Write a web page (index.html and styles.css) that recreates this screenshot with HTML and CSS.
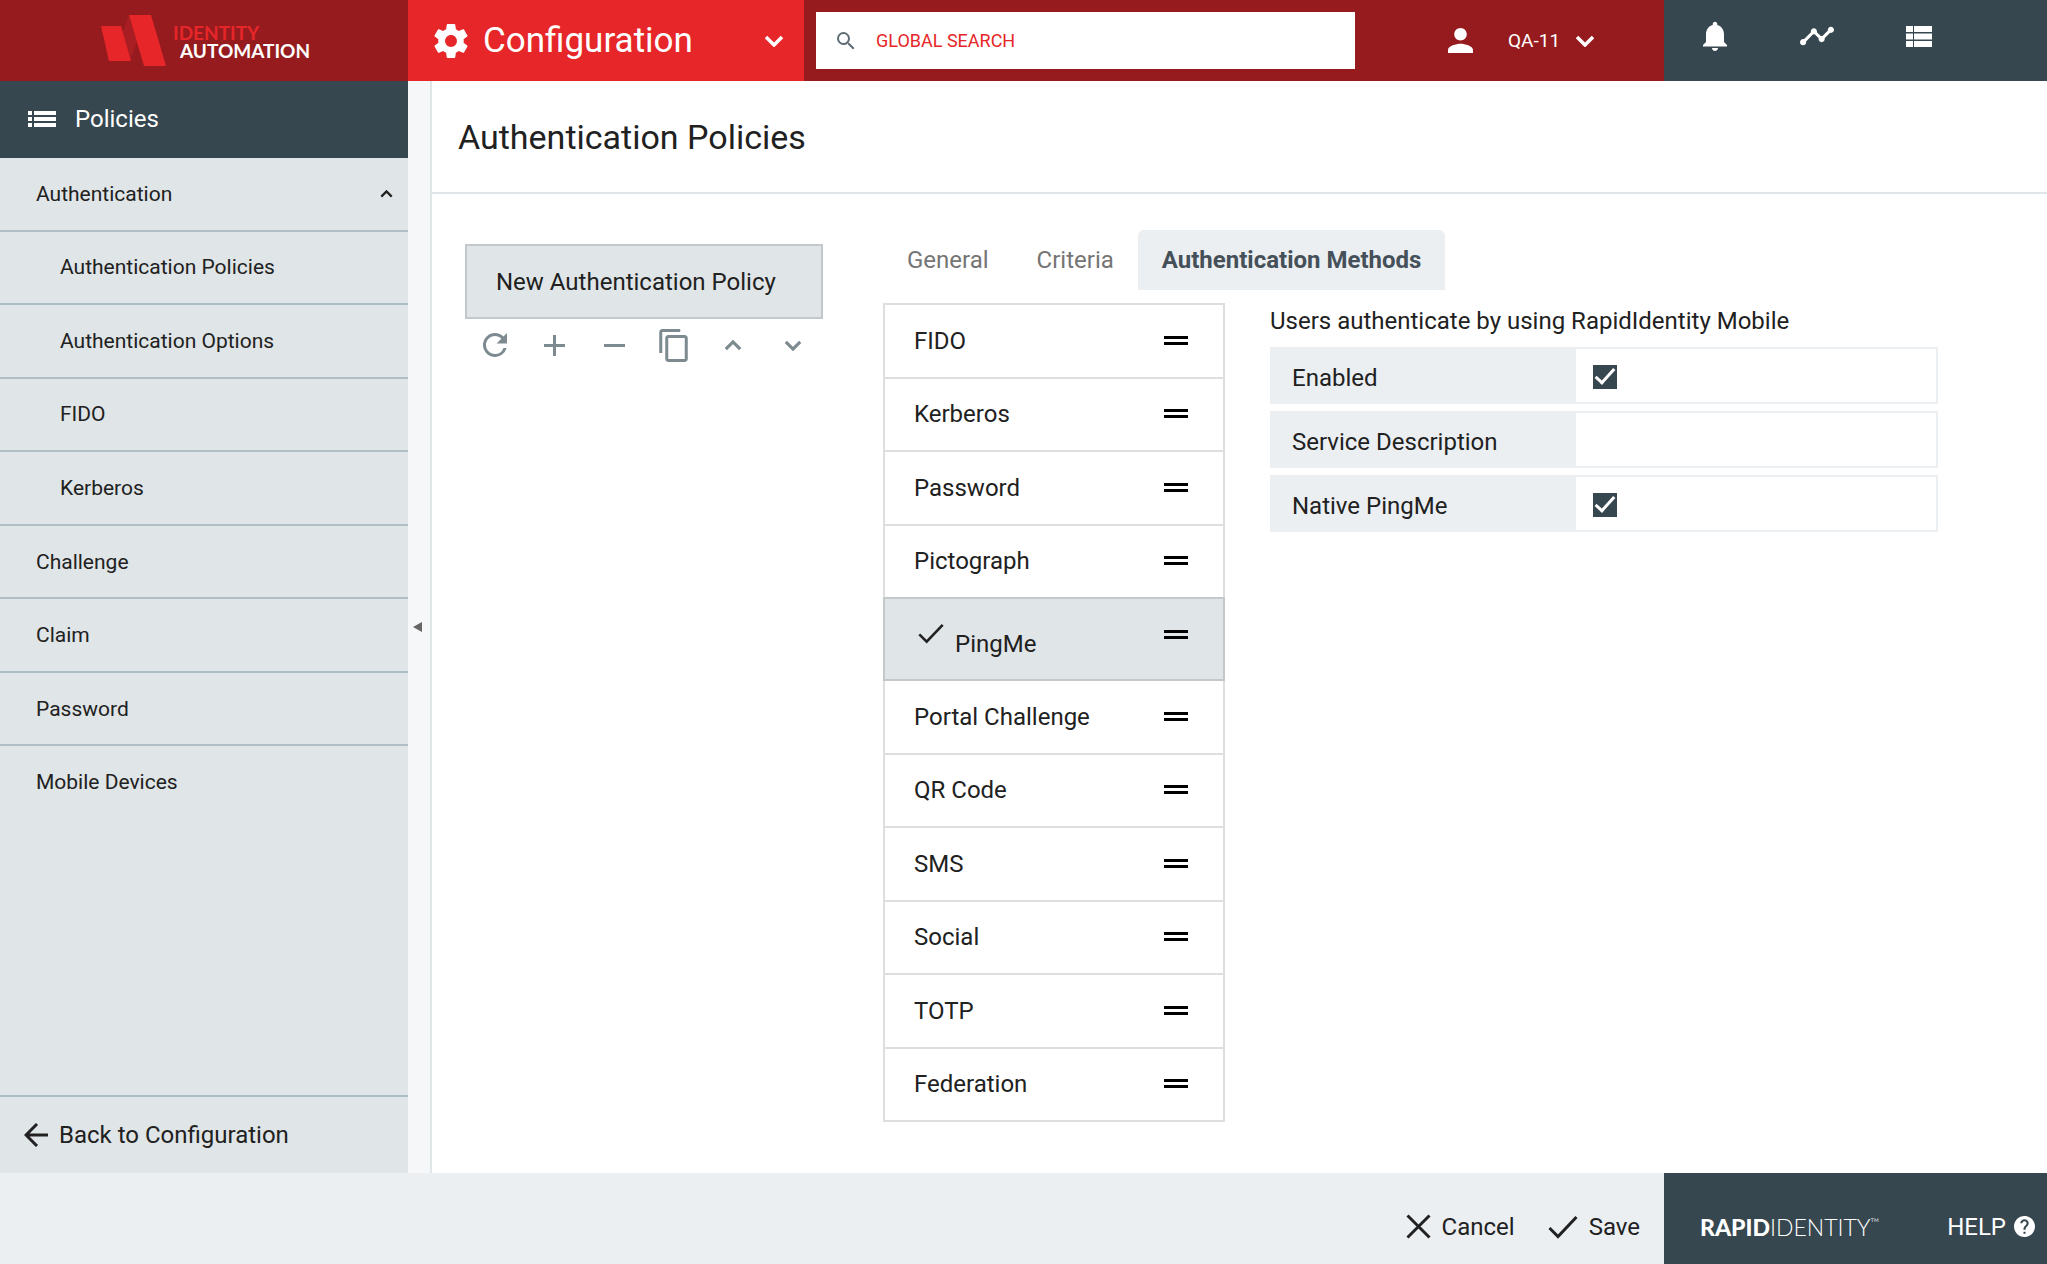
FILE: index.html
```html
<!DOCTYPE html>
<html lang="en">
<head>
  <meta charset="UTF-8">
  <meta name="viewport" content="width=device-width, initial-scale=1.0">
  <title>Authentication Policies</title>
  <link rel="stylesheet" href="styles.css">
</head>
<body>
  <!-- shared icons -->
  <svg class="sprite" aria-hidden="true">
    <symbol id="drag" viewBox="0 0 24 10"><path d="M0 0h24v3H0zM0 6h24v3H0z"/></symbol>
    <symbol id="check" viewBox="0 0 30 24"><path d="M1.500 13l8.500 8.500L28.500 2" fill="none" stroke="currentColor" stroke-width="3"/></symbol>
    <symbol id="chevron-down" viewBox="0 0 20 12"><path d="M2 2l8 8 8-8" fill="none" stroke="currentColor" stroke-width="3.500"/></symbol>
    <symbol id="chevron-up" viewBox="0 0 20 12"><path d="M2 10l8-8 8 8" fill="none" stroke="currentColor" stroke-width="3.500"/></symbol>
  </svg>

  <header class="topbar">
    <a class="logo" href="#">
      <svg width="66" height="52" viewBox="0 0 66 52" aria-hidden="true">
        <path d="M20 21L28 0l8 26-7 20z" fill="#a81e22"/>
        <path d="M0 11h20l10 35H8z" fill="#e62629"/>
        <path d="M28 0h22l15 51H43z" fill="#e62629"/>
      </svg>
      <span class="logo-text"><span class="logo-top">IDENTITY</span><span class="logo-bottom">AUTOMATION</span></span>
    </a>
    <button class="module" type="button">
      <svg width="34" height="34" viewBox="2 2 20 20" aria-hidden="true"><path fill="currentColor" d="M19.430 12.980c.04-.32.07-.64.07-.98s-.03-.66-.07-.98l2.110-1.650c.19-.15.24-.42.12-.64l-2-3.460c-.12-.22-.39-.3-.61-.22l-2.490 1c-.52-.4-1.080-.73-1.690-.98l-.38-2.650C14.460 2.180 14.250 2 14 2h-4c-.25 0-.46.18-.49.42l-.38 2.650c-.61.25-1.170.59-1.690.98l-2.490-1c-.23-.09-.49 0-.61.22l-2 3.460c-.13.22-.07.49.12.64l2.110 1.650c-.04.32-.07.65-.07.98s.03.66.07.98l-2.110 1.650c-.19.15-.24.42-.12.64l2 3.460c.12.22.39.3.61.22l2.490-1c.52.4 1.080.73 1.690.98l.38 2.650c.03.24.24.42.49.42h4c.25 0 .46-.18.49-.42l.38-2.650c.61-.25 1.170-.59 1.690-.98l2.490 1c.23.09.49 0 .61-.22l2-3.460c.12-.22.07-.49-.12-.64l-2.110-1.650zM12 15.500c-1.930 0-3.500-1.570-3.500-3.500s1.570-3.500 3.500-3.500 3.500 1.570 3.500 3.500-1.570 3.500-3.500 3.500z"/></svg>
      <span class="module-name">Configuration</span>
      <svg width="20" height="12"><use href="#chevron-down"/></svg>
    </button>
    <form class="search">
      <svg width="18" height="18" viewBox="3 3 18 18" aria-hidden="true"><path fill="#5f6e75" d="M15.500 14h-.79l-.28-.27A6.471 6.471 0 0 0 16 9.500 6.500 6.500 0 1 0 9.500 16c1.610 0 3.090-.59 4.230-1.570l.27.28v.79l5 4.990L20.490 19l-4.990-5zm-6 0C7.010 14 5 11.990 5 9.500S7.010 5 9.500 5 14 7.010 14 9.500 11.990 14 9.500 14z"/></svg>
      <input type="search" placeholder="GLOBAL SEARCH" aria-label="Global search">
    </form>
    <button class="user" type="button">
      <svg width="25" height="25" viewBox="4 4 16 16" aria-hidden="true"><path fill="currentColor" d="M12 12c2.210 0 4-1.790 4-4s-1.790-4-4-4-4 1.790-4 4 1.790 4 4 4zm0 2c-2.670 0-8 1.340-8 4v2h16v-2c0-2.660-5.330-4-8-4z"/></svg>
      <span class="user-name">QA-11</span>
      <svg width="20" height="12"><use href="#chevron-down"/></svg>
    </button>
    <div class="tools">
      <button type="button" aria-label="Notifications">
        <svg width="24" height="30" viewBox="4 2 16 20" aria-hidden="true"><path fill="currentColor" d="M12 22c1.100 0 2-.9 2-2h-4c0 1.100.89 2 2 2zm6-6v-5c0-3.070-1.640-5.640-4.500-6.320V4c0-.83-.67-1.500-1.500-1.500s-1.500.67-1.500 1.500v.68C7.630 5.360 6 7.920 6 11v5l-2 2v1h16v-1l-2-2z"/></svg>
      </button>
      <button type="button" aria-label="Activity">
        <svg width="34" height="20" viewBox="1 6 22 12" aria-hidden="true"><path fill="currentColor" d="M23 8c0 1.100-.9 2-2 2-.18 0-.35-.02-.51-.07l-3.560 3.550c.05.16.07.34.07.52 0 1.100-.9 2-2 2s-2-.9-2-2c0-.18.02-.36.07-.52l-2.550-2.550c-.16.05-.34.07-.52.07s-.36-.02-.52-.07l-4.550 4.560c.05.16.07.33.07.51 0 1.100-.9 2-2 2s-2-.9-2-2 .9-2 2-2c.18 0 .35.02.51.07l4.560-4.550C8.020 9.360 8 9.180 8 9c0-1.100.9-2 2-2s2 .9 2 2c0 .18-.02.36-.07.52l2.550 2.550c.16-.05.34-.07.52-.07s.36.02.52.07l3.550-3.560C19.020 8.350 19 8.180 19 8c0-1.100.9-2 2-2s2 .9 2 2z"/></svg>
      </button>
      <button type="button" aria-label="Requests">
        <svg width="26" height="21" viewBox="0 0 26 21" aria-hidden="true"><path fill="currentColor" d="M0 0h7v6H0zM8 0h18v6H8zM0 7.500h7v6H0zM8 7.500h18v6H8zM0 15h7v6H0zM8 15h18v6H8z"/></svg>
      </button>
    </div>
  </header>

  <div class="page">
    <aside class="sidebar">
      <h2 class="sidebar-title">
        <svg width="28" height="16" viewBox="0 0 28 16" aria-hidden="true"><path fill="currentColor" d="M0 0h4v4H0zM6 0h22v4H6zM0 6h4v4H0zM6 6h22v4H6zM0 12h4v4H0zM6 12h22v4H6z"/></svg>
        Policies
      </h2>
      <nav class="menu">
        <a class="open" href="#">Authentication <svg width="13" height="8"><use href="#chevron-up"/></svg></a>
        <a class="sub" href="#">Authentication Policies</a>
        <a class="sub" href="#">Authentication Options</a>
        <a class="sub" href="#">FIDO</a>
        <a class="sub" href="#">Kerberos</a>
        <a href="#">Challenge</a>
        <a href="#">Claim</a>
        <a href="#">Password</a>
        <a href="#">Mobile Devices</a>
      </nav>
      <a class="back" href="#">
        <svg width="24" height="24" viewBox="0 0 24 24" aria-hidden="true"><path d="M24 12H3M13 1L2 12l11 11" fill="none" stroke="currentColor" stroke-width="3"/></svg>
        Back to Configuration
      </a>
    </aside>

    <button class="splitter" type="button" aria-label="Collapse menu">
      <svg width="9" height="10" viewBox="0 0 9 10" aria-hidden="true"><path d="M0 5l9-5v10z" fill="#666"/></svg>
    </button>

    <main class="main">
      <h1 class="page-title">Authentication Policies</h1>
      <div class="content">
        <section class="policies">
          <button class="policy" type="button">New Authentication Policy</button>
          <div class="actions">
            <button type="button" aria-label="Refresh"><svg width="24" height="24" viewBox="4 4 16 16" aria-hidden="true"><path fill="currentColor" d="M17.650 6.350A7.958 7.958 0 0 0 12 4a8 8 0 1 0 7.730 10h-2.080A5.990 5.990 0 0 1 12 18c-3.310 0-6-2.690-6-6s2.690-6 6-6c1.660 0 3.140.69 4.220 1.780L13 11h7V4l-2.350 2.350z"/></svg></button>
            <button type="button" aria-label="Add"><svg width="21" height="21" viewBox="0 0 21 21" aria-hidden="true"><path fill="currentColor" d="M0 9h9V0h3v9h9v3h-9v9H9v-9H0z"/></svg></button>
            <button type="button" aria-label="Remove"><svg width="21" height="21" viewBox="0 0 21 21" aria-hidden="true"><path fill="currentColor" d="M0 9h21v3H0z"/></svg></button>
            <button type="button" aria-label="Copy"><svg width="29" height="33" viewBox="2 1 19 22" aria-hidden="true"><path fill="currentColor" d="M16 1H4c-1.100 0-2 .9-2 2v14h2V3h12V1zm3 4H8c-1.100 0-2 .9-2 2v14c0 1.100.9 2 2 2h11c1.100 0 2-.9 2-2V7c0-1.100-.9-2-2-2zm0 16H8V7h11v14z"/></svg></button>
            <button type="button" aria-label="Move up"><svg width="18" height="11"><use href="#chevron-up"/></svg></button>
            <button type="button" aria-label="Move down"><svg width="18" height="11"><use href="#chevron-down"/></svg></button>
          </div>
        </section>

        <section class="detail">
          <div class="tabs" role="tablist">
            <button type="button" role="tab">General</button>
            <button type="button" role="tab">Criteria</button>
            <button class="active" type="button" role="tab" aria-selected="true">Authentication Methods</button>
          </div>
          <div class="panel">
            <ul class="methods">
              <li><button type="button">FIDO</button><svg class="drag"><use href="#drag"/></svg></li>
              <li><button type="button">Kerberos</button><svg class="drag"><use href="#drag"/></svg></li>
              <li><button type="button">Password</button><svg class="drag"><use href="#drag"/></svg></li>
              <li><button type="button">Pictograph</button><svg class="drag"><use href="#drag"/></svg></li>
              <li class="selected"><button type="button"><svg width="26" height="21"><use href="#check"/></svg><span>PingMe</span></button><svg class="drag"><use href="#drag"/></svg></li>
              <li><button type="button">Portal Challenge</button><svg class="drag"><use href="#drag"/></svg></li>
              <li><button type="button">QR Code</button><svg class="drag"><use href="#drag"/></svg></li>
              <li><button type="button">SMS</button><svg class="drag"><use href="#drag"/></svg></li>
              <li><button type="button">Social</button><svg class="drag"><use href="#drag"/></svg></li>
              <li><button type="button">TOTP</button><svg class="drag"><use href="#drag"/></svg></li>
              <li><button type="button">Federation</button><svg class="drag"><use href="#drag"/></svg></li>
            </ul>
            <form class="settings">
              <p>Users authenticate by using RapidIdentity Mobile</p>
              <div class="field">
                <label for="enabled">Enabled</label>
                <div class="value"><input type="checkbox" id="enabled" checked></div>
              </div>
              <div class="field">
                <label for="description">Service Description</label>
                <div class="value"><input type="text" id="description"></div>
              </div>
              <div class="field">
                <label for="native">Native PingMe</label>
                <div class="value"><input type="checkbox" id="native" checked></div>
              </div>
            </form>
          </div>
        </section>
      </div>
    </main>
  </div>

  <footer class="footer">
    <div class="footer-actions">
      <button type="button"><svg width="25" height="25" viewBox="0 0 25 25" aria-hidden="true"><path d="M1.500 1.500l22 22M23.500 1.500l-22 22" stroke="currentColor" stroke-width="3"/></svg>Cancel</button>
      <button type="button"><svg width="30" height="24"><use href="#check"/></svg>Save</button>
    </div>
    <div class="footer-brand">
      <span class="brand"><b>RAPID</b>IDENTITY<sup>™</sup></span>
      <a class="help" href="#">HELP
        <svg width="21" height="21" viewBox="2 2 20 20" aria-hidden="true"><path fill="currentColor" d="M12 2C6.480 2 2 6.480 2 12s4.480 10 10 10 10-4.480 10-10S17.520 2 12 2zm1 17h-2v-2h2v2zm2.070-7.750l-.9.920C13.450 12.900 13 13.500 13 15h-2v-.5c0-1.100.45-2.100 1.170-2.830l1.240-1.260c.37-.36.59-.86.59-1.410 0-1.100-.9-2-2-2s-2 .9-2 2H8c0-2.210 1.790-4 4-4s4 1.790 4 4c0 .88-.36 1.680-.93 2.250z"/></svg>
      </a>
    </div>
  </footer>
</body>
</html>
```
FILE: styles.css
```css
*, *::before, *::after {
  margin: 0;
  padding: 0;
  box-sizing: border-box;
}

body {
  display: flex;
  flex-direction: column;
  min-height: 100vh;
  font-family: Roboto, "Liberation Sans", sans-serif;
  font-size: 24px;
  line-height: 28px;
  color: #212121;
  background: #fff;
}

button, input {
  font: inherit;
  color: inherit;
  background: none;
  border: 0;
}

button {
  cursor: pointer;
}

a {
  color: inherit;
  text-decoration: none;
}

svg {
  flex: none;
}

.sprite {
  display: none;
}

/* top bar */
.topbar {
  display: flex;
  height: 81px;
  color: #fff;
  background: #961b1e;
}

.logo {
  display: flex;
  align-items: center;
  width: 408px;
  padding-left: 101px;
  gap: 6px;
}

.logo-text {
  display: flex;
  flex-direction: column;
  padding-top: 2px;
  font-family: Lato, sans-serif;
  font-size: 19px;
  font-weight: 700;
  line-height: 18px;
}

.logo-top {
  color: #e62629;
}

.logo-bottom {
  padding-left: 7px;
}

.module {
  display: flex;
  align-items: center;
  width: 396px;
  padding: 0 20px 0 26px;
  gap: 15px;
  font-size: 35px;
  background: #e62629;
}

.module-name {
  flex: 1;
  text-align: left;
}

.search {
  display: flex;
  flex: 1;
  align-items: center;
  margin: 12px 0 12px 12px;
  padding-left: 21px;
  gap: 21px;
  background: #fff;
}

.search input {
  flex: 1;
  font-size: 18px;
  outline: none;
}

.search input::placeholder {
  color: #e62629;
}

.user {
  display: flex;
  align-items: center;
  width: 309px;
  padding-left: 93px;
  font-size: 19px;
  white-space: nowrap;
}

.user-name {
  margin: 0 15px 0 35px;
}

.tools {
  display: grid;
  grid-template-columns: repeat(3, 102px);
  width: 383px;
  padding-bottom: 9px;
  background: #37474f;
}

.tools button {
  display: flex;
  align-items: center;
  justify-content: center;
}

/* sidebar */
.page {
  display: flex;
  flex: 1;
}

.sidebar {
  display: flex;
  flex-direction: column;
  width: 408px;
  background: #e0e5e7;
}

.sidebar-title {
  display: flex;
  align-items: center;
  height: 77px;
  padding: 0 0 2px 28px;
  gap: 19px;
  font-size: 24px;
  font-weight: 400;
  color: #fff;
  background: #37474f;
}

.menu {
  display: grid;
  grid-auto-rows: 1fr;
  height: 662px;
  font-size: 21px;
}

.menu a {
  display: flex;
  align-items: center;
  justify-content: space-between;
  padding: 0 15px 0 36px;
  border-bottom: 2px solid #afbec5;
}

.menu a.sub {
  padding-left: 60px;
}

.menu a:last-child {
  border-bottom-color: transparent;
}

.back {
  display: flex;
  align-items: center;
  height: 78px;
  margin-top: auto;
  padding-left: 24px;
  gap: 11px;
  border-top: 2px solid #afbec5;
}

.splitter {
  display: flex;
  align-items: center;
  width: 24px;
  padding-left: 5px;
  background: #f5f7f9;
  border-right: 2px solid #e0e5e7;
}

/* main */
.main {
  flex: 1;
}

.page-title {
  padding: 37px 26px 35px;
  font-size: 34px;
  font-weight: 400;
  line-height: 39px;
  border-bottom: 2px solid #e0e5e7;
}

.content {
  display: flex;
  padding: 36px 109px 36px 33px;
  gap: 60px;
}

.policies {
  width: 358px;
  padding-top: 14px;
}

.policy {
  width: 100%;
  height: 75px;
  padding-left: 29px;
  text-align: left;
  background: #e0e5e7;
  border: 2px solid #c3c8cb;
}

.actions {
  display: grid;
  grid-template-columns: repeat(6, 1fr);
  height: 52px;
  color: #7d8a90;
}

.actions button {
  display: flex;
  align-items: center;
  justify-content: center;
}

.detail {
  flex: 1;
}

.tabs {
  display: flex;
}

.tabs button {
  height: 60px;
  padding: 0 24px;
  color: #757575;
}

.tabs button.active {
  font-weight: 700;
  color: #455059;
  background: #ebeff2;
  border-radius: 6px 6px 0 0;
}

.panel {
  display: flex;
  padding-top: 13px;
  gap: 45px;
}

.methods {
  display: grid;
  grid-template-rows: repeat(4, 1fr) 82px repeat(6, 1fr);
  width: 342px;
  height: 819px;
  list-style: none;
  border-top: 2px solid #dedede;
}

.methods li {
  display: flex;
  align-items: center;
  padding-right: 35px;
  border: solid #dedede;
  border-width: 0 2px 2px;
}

.methods button {
  flex: 1;
  height: 100%;
  padding-left: 29px;
  text-align: left;
}

.methods .selected {
  margin-top: -2px;
  background: #e0e5e7;
  border-color: #c3c8cb;
  border-top-width: 2px;
}

.methods .selected button {
  display: flex;
  align-items: flex-end;
  padding: 0 0 21px 33px;
  gap: 11px;
}

.methods .selected button svg {
  margin-bottom: 14px;
}

.methods .selected .drag {
  margin-bottom: 8px;
}

.drag {
  width: 24px;
  height: 10px;
}

.settings {
  display: flex;
  flex: 1;
  flex-direction: column;
  gap: 7px;
}

.settings p {
  padding-top: 4px;
  margin-bottom: 5px;
}

.field {
  display: flex;
  height: 57px;
  background: #ebeff2;
}

.field label {
  width: 306px;
  padding: 17px 0 0 22px;
}

.value {
  display: flex;
  flex: 1;
  align-items: center;
  padding-left: 17px;
  background: #fff;
  border: 2px solid #ebeff2;
  border-left: 0;
}

.value input[type="text"] {
  width: 100%;
  height: 100%;
  outline: none;
}

.value input[type="checkbox"] {
  display: flex;
  align-items: center;
  justify-content: center;
  width: 24px;
  height: 24px;
  margin-top: 2px;
  appearance: none;
  background: #37474f;
}

.value input[type="checkbox"]:checked::before {
  content: "";
  width: 10px;
  height: 20px;
  margin-bottom: 5px;
  border: solid #fff;
  border-width: 0 3px 3px 0;
  transform: rotate(42deg);
}

/* footer */
.footer {
  display: flex;
  height: 91px;
  background: #ebeff2;
}

.footer-actions {
  display: flex;
  flex: 1;
  justify-content: flex-end;
  padding: 16px 24px 0 0;
  gap: 33px;
}

.footer-actions button {
  display: flex;
  align-items: center;
  gap: 11px;
}

.footer-brand {
  display: flex;
  align-items: center;
  justify-content: space-between;
  width: 383px;
  padding: 16px 12px 0 36px;
  color: #fff;
  background: #37474f;
}

.brand {
  font-family: Lato, sans-serif;
  font-size: 23px;
  font-weight: 300;
}

.brand b {
  font-weight: 900;
}

.brand sup {
  font-size: 12px;
  line-height: 1;
}

.help {
  display: flex;
  align-items: center;
  gap: 8px;
}
```
